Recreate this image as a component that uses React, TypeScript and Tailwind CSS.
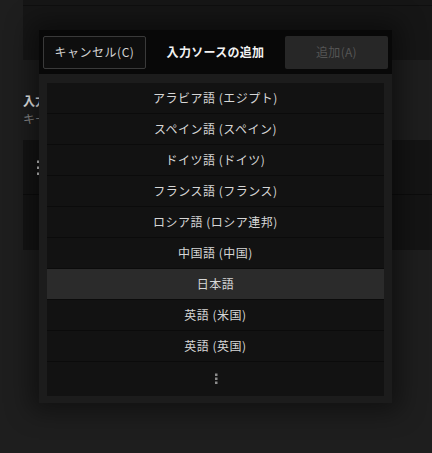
import React from "react";

const languages = [
  "アラビア語 (エジプト)",
  "スペイン語 (スペイン)",
  "ドイツ語 (ドイツ)",
  "フランス語 (フランス)",
  "ロシア語 (ロシア連邦)",
  "中国語 (中国)",
  "日本語",
  "英語 (米国)",
  "英語 (英国)",
];

// vertical "more" dots; gap is the distance between dot tops
const MoreDots = ({ className, gap = 4 }: { className?: string; gap?: number }) => (
  <svg width="4" height={gap * 2 + 3} viewBox={`0 0 4 ${gap * 2 + 3}`} className={className}>
    <rect x="1" y="0.5" width="2.5" height="2.5" fill="currentColor" />
    <rect x="1" y={0.5 + gap} width="2.5" height="2.5" fill="currentColor" />
    <rect x="1" y={0.5 + gap * 2} width="2.5" height="2.5" fill="currentColor" />
  </svg>
);

const App = () => {
  const selected = "日本語";

  return (
    <div
      className="relative w-[432px] h-[453px] overflow-hidden bg-[#1e1e1e] text-[12px]"
      style={{ fontFamily: '"Noto Sans CJK JP", "Noto Sans", sans-serif' }}
    >
      {/* settings page behind the dialog */}
      <div className="ml-[23px]">
        <div className="h-[60px] bg-[#161616]">
          <div className="h-[6px] border-b border-[#0f0f0f]" />
        </div>
        <div className="pt-[32px] h-[80px]">
          <div className="font-bold text-[#f0f0f0] leading-[18px]">入力</div>
          <div className="text-[#8a8a8a] leading-[18px]">キー</div>
        </div>
        <div className="bg-[#141414]">
          <div className="h-[55px] border-b border-[#0c0c0c] flex items-center pl-[13px]">
            <MoreDots className="text-[#cfcfcf]" gap={6} />
          </div>
          <div className="h-[55px]" />
        </div>
      </div>

      {/* dialog */}
      <div className="absolute left-[39px] top-[30px] w-[353px] shadow-[0_0_24px_8px_rgba(0,0,0,0.45)]">
        <div className="h-[44px] bg-[#080808] flex items-center justify-between px-[4px]">
          <button className="w-[103px] h-[33px] rounded-[2px] border border-[#3a3a3a] bg-[#0e0e0e] text-[#d2d2d2] leading-none tracking-[0.5px]">
            キャンセル(C)
          </button>
          <div className="font-bold text-[#f2f2f2] tracking-[0.3px]">入力ソースの追加</div>
          <button className="w-[103px] h-[33px] rounded-[2px] bg-[#272727] text-[#555555] leading-none tracking-[0.3px]">
            追加(A)
          </button>
        </div>
        <div className="bg-[#1c1c1c] px-[8px] pt-[9px] pb-[7px]">
          <div className="bg-[#121212]">
            {languages.map((lang) => (
              <div
                key={lang}
                className={`h-[31px] border-b border-[#0b0b0b] flex items-center justify-center text-[#d6d6d6] tracking-[0.5px] ${
                  lang === selected ? "bg-[#2b2b2b]" : ""
                }`}
              >
                {lang}
              </div>
            ))}
            <div className="h-[34px] flex items-center justify-center pb-[2px]">
              <MoreDots className="text-[#8c8c8c]" gap={4} />
            </div>
          </div>
        </div>
      </div>
    </div>
  );
};

export default App;
